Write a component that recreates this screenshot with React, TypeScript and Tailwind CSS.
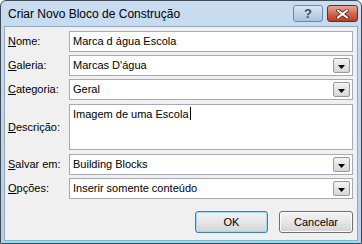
import React from "react";

const font = { fontFamily: '"Liberation Sans", Arial, sans-serif' };

function Arrow() {
  return (
    <span className="absolute right-[2px] top-[2px] bottom-[2px] w-[17px] rounded-[2px] border border-[#9a9a9a] bg-gradient-to-b from-[#f4f4f4] to-[#d6d6d6] flex items-center justify-center">
      <svg width="7" height="4" viewBox="0 0 7 4" className="mt-[2px]">
        <path d="M0 0h7L3.5 4z" fill="#000" />
      </svg>
    </span>
  );
}

type FieldProps = { hot: string; rest: string; value: string; combo?: boolean };

function Field({ hot, rest, value, combo }: FieldProps) {
  return (
    <div className="flex items-center h-[21px]">
      <span className="w-[61px] shrink-0 text-[11px] text-black">
        <span className="underline underline-offset-[1px]">{hot}</span>
        {rest}
      </span>
      <div className="relative flex-1 h-full border border-[#a4abb4] bg-white flex items-center pl-[3px] text-[11px] text-black">
        {value}
        {combo && <Arrow />}
      </div>
    </div>
  );
}

function Button({ children, focused }: { children: React.ReactNode; focused?: boolean }) {
  return (
    <button
      className={
        "h-[22px] rounded-[3px] border text-[11px] text-black bg-gradient-to-b from-[#f3f3f3] via-[#e6e6e6] to-[#d3d3d3] " +
        (focused
          ? "w-[73px] border-[#3c7fb1] shadow-[inset_0_0_0_1px_#9fd8f6]"
          : "w-[74px] border-[#707070] shadow-[inset_0_0_0_1px_#fbfbfb]")
      }
    >
      {children}
    </button>
  );
}

export default function App() {
  return (
    <div style={font} className="w-[362px] h-[244px] bg-white">
      <div className="w-[362px] h-[244px] flex flex-col rounded-t-[6px] border border-[#404a56] bg-gradient-to-b from-[#c9ddf1] to-[#b6cfe9] overflow-hidden">
        <div className="h-[25px] shrink-0 flex items-start justify-between pl-[7px] pr-[3px]">
          <span className="mt-[5px] text-[12px] leading-[16px] text-black">Criar Novo Bloco de Construção</span>
          <div className="flex gap-[4px] mt-[4px]">
            <div className="w-[30px] h-[17px] rounded-[3px] border border-[#6d89a7] bg-gradient-to-b from-[#dbe8f5] via-[#c1d4e9] to-[#a9c3df] flex items-center justify-center text-[13px] leading-none font-bold text-[#3c4c60]">
              ?
            </div>
            <div className="w-[31px] h-[17px] rounded-[3px] border border-[#6f2a20] bg-gradient-to-b from-[#e8a796] via-[#d36a54] to-[#b83a24] flex items-center justify-center">
              <svg width="13" height="10" viewBox="0 0 13 10">
                <path d="M2 1.5l9 7M11 1.5l-9 7" stroke="#5a2016" strokeWidth="3.6" strokeLinecap="square" />
                <path d="M2 1.5l9 7M11 1.5l-9 7" stroke="#fff" strokeWidth="2" strokeLinecap="square" />
              </svg>
            </div>
          </div>
        </div>
        <div className="flex-1 mx-[3px] mb-[2px] border border-[#8fa8c2] border-b-[#69c4d9] bg-[#f0f0f0] pl-[3px] pr-[4px] pt-[4px] flex flex-col">
          <div className="flex flex-col gap-[3px]">
            <Field hot="N" rest="ome:" value="Marca d água Escola" />
            <Field hot="G" rest="aleria:" value="Marcas D'água" combo />
            <Field hot="C" rest="ategoria:" value="Geral" combo />
            <div className="flex items-center h-[46px] my-[1px]">
              <span className="w-[61px] shrink-0 text-[11px] text-black">
                <span className="underline underline-offset-[1px]">D</span>escrição:
              </span>
              <div className="flex-1 h-full border border-[#a4abb4] bg-white pl-[3px] pt-[2px] text-[11px] leading-[14px] text-black flex items-start">
                <span>Imagem de uma Escola</span>
                <span className="inline-block w-[1px] h-[13px] bg-black ml-[1px]" />
              </div>
            </div>
            <Field hot="S" rest="alvar em:" value="Building Blocks" combo />
            <Field hot="O" rest="pções:" value="Inserir somente conteúdo" combo />
          </div>
          <div className="flex justify-end gap-[11px] mt-[12px]">
            <Button focused>OK</Button>
            <Button>Cancelar</Button>
          </div>
        </div>
      </div>
    </div>
  );
}
